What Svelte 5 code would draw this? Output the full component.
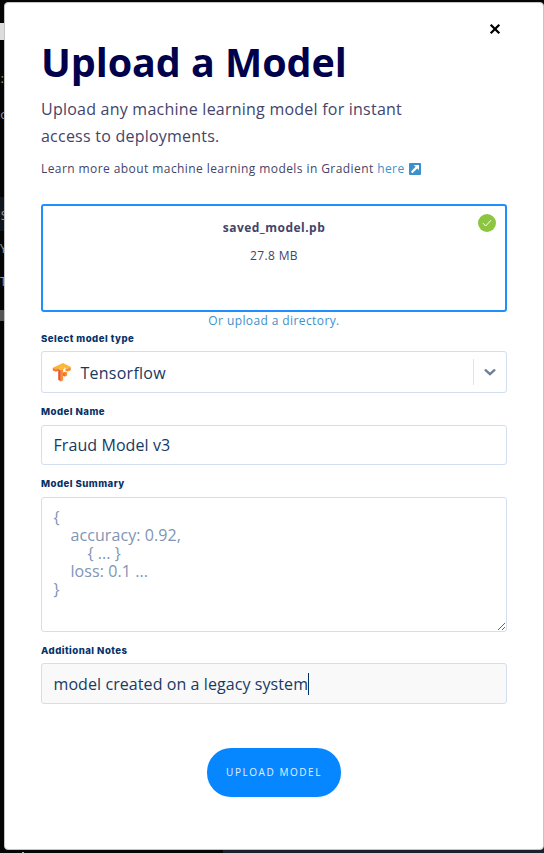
<script>
  let modelName = $state('Fraud Model v3');
  let summary = $state('');
  let notes = $state('model created on a legacy system');
  const placeholder = '{\n    accuracy: 0.92,\n        { ... }\n    loss: 0.1 ...\n}';
</script>

<div class="page">
  <div class="backdrop" aria-hidden="true">
    <i class="tab"></i>
    <i class="row"></i>
    <i class="chip"></i>
    <span style="top:70px">:</span>
    <span style="top:106px" class="round">o</span>
    <span style="top:207px" class="round">S</span>
    <span style="top:241px" class="wide">Y</span>
    <span style="top:274px" class="wide">T</span>
    <i class="foot"></i>
    <i class="tick"></i>
  </div>

  <section class="modal">
    <button class="close" aria-label="Close">
      <svg width="12" height="12" viewBox="0 0 12 12"><path d="M1.7 1.7 10.3 10.3M10.3 1.7 1.7 10.3" stroke="#000" stroke-width="2.3" /></svg>
    </button>
    <h1><span>Upload a Model</span></h1>
    <p class="lead"><span>Upload any machine learning model for instant</span><br /><span>access to deployments.</span></p>
    <p class="learn">
      <span>Learn more about machine learning models in Gradient <a href="#docs">here</a></span>
      <svg width="12" height="12" viewBox="0 0 12 12">
        <rect width="12" height="12" rx="1" fill="#3c91cb" />
        <path d="M4.8 2H10v5.2L8.3 5.5 3.4 10.2 1.9 8.7 6.6 3.8z" fill="#fff" />
      </svg>
    </p>

    <div class="drop">
      <strong>saved_model.pb</strong>
      <span>27.8 MB</span>
      <svg class="ok" width="18" height="18" viewBox="0 0 18 18">
        <circle cx="9" cy="9" r="9" fill="#8cc63f" />
        <path d="M5 9.2 7.7 12 13 6.2" fill="none" stroke="#fff" stroke-width="1" />
      </svg>
    </div>
    <a class="directory" href="#directory"><span>Or upload a directory.</span></a>

    <div class="label first"><span>Select model type</span></div>
    <div class="select">
      <svg class="tf" width="20" height="20" viewBox="0 0 20 20">
        <path d="M.8 5.8 11 1l7.8 4-3.6 1.8L11 4.8 4 8z" fill="#fbb634" />
        <path d="M.8 5.8 4 7.4 6.2 6.4v2.4L4 9.8.8 8.4z" fill="#f37a30" />
        <path d="M15.2 6.8 18.8 5v3.2L15.6 9.6 13.4 8.4V6.2z" fill="#f68c32" />
        <path d="M6.2 6.8 8.8 8.2v11.2l-2.6-1.6z" fill="#e8542b" />
        <path d="M6.2 6.8 11 4.8l2.4 1.2-4.6 2.2z" fill="#fbb634" />
        <path d="M8.8 8.2 11.2 7v11.2l-2.4 1.2z" fill="#f79032" />
        <path d="M11.2 10.6 13.4 9.6 15.2 10.6v2.8L12.8 14.6l-1.6-.8z" fill="#f79032" />
        <path d="M11.2 10.6 12.8 11.6v3l-1.6-.8z" fill="#e8642b" />
      </svg>
      <span class="value">Tensorflow</span>
      <span class="arrow">
        <svg width="12" height="8" viewBox="0 0 12 8"><path d="M1.6 2.2 6 6.1l4.4-3.9" fill="none" stroke="#6e7e96" stroke-width="2.3" stroke-linecap="round" /></svg>
      </span>
    </div>

    <label class="label" for="name"><span>Model Name</span></label>
    <input id="name" class="name" bind:value={modelName} />

    <label class="label" for="summary"><span>Model Summary</span></label>
    <textarea id="summary" bind:value={summary} {placeholder}></textarea>

    <label class="label last" for="notes"><span>Additional Notes</span></label>
    <div class="notes"><span id="notes" role="textbox">{notes}</span><i></i></div>

    <button class="submit">UPLOAD MODEL</button>
  </section>
</div>

<style>
  :global(body) { background: #050505; }
  * { box-sizing: border-box; }
  .page {
    position: relative;
    width: 544px;
    height: 853px;
    padding: 2px 0 0 4px;
    overflow: hidden;
    background: #050505;
    font-family: "Open Sans", "Noto Sans", sans-serif;
    color: #44446a;
  }
  .backdrop { position: absolute; inset: 0; font-size: 13px; color: #999; }
  .backdrop span { position: absolute; right: 540px; line-height: 16px; }
  .backdrop .round { right: 536px; }
  .backdrop .wide { right: auto; left: 0; font-size: 12px; }
  .backdrop i { position: absolute; left: 0; width: 6px; }
  .backdrop .tab { top: 23px; height: 17px; background: #ddd; }
  .backdrop .row { top: 197px; height: 34px; background: #11171e; }
  .backdrop .chip { top: 310px; height: 11px; background: #555; }
  .backdrop .foot { left: 223px; top: 848px; width: 321px; height: 5px; background: #1b202e; }
  .backdrop .tick { left: 22px; top: 852px; width: 2px; height: 1px; background: #aaa; }
  .modal {
    position: relative;
    width: 540px;
    height: 848px;
    padding: 34px 36px 0;
    display: flex;
    flex-direction: column;
    background: #fff;
    border: 1px solid #c4c4c4;
    border-radius: 4px;
  }
  .close {
    position: absolute;
    top: 20px;
    right: 42px;
    width: 12px;
    height: 12px;
    padding: 0;
    border: 0;
    background: none;
    display: flex;
  }
  h1 { margin: 0; height: 50px; line-height: 50px; font-size: 39.5px; font-weight: 700; letter-spacing: -0.07px; color: #00004d; }
  p { margin: 0; }
  .lead { margin-top: 9px; font-size: 16px; line-height: 27px; letter-spacing: 0.23px; }
  .learn { display: flex; align-items: center; gap: 4px; margin-top: 10px; height: 18px; font-size: 12px; line-height: 18px; letter-spacing: 0.42px; }
  a { color: #3c91cb; text-decoration: none; }
  .drop {
    position: relative;
    height: 108px;
    margin-top: 26px;
    padding-top: 12px;
    display: flex;
    flex-direction: column;
    align-items: center;
    gap: 8px;
    border: 2px solid #1e90ff;
    border-radius: 3px;
    font-size: 12px;
    line-height: 20px;
    letter-spacing: 0.35px;
  }
  .drop strong { letter-spacing: 0.48px; }
  .ok { position: absolute; top: 8px; right: 9px; }
  .directory { height: 18px; line-height: 18px; font-size: 12px; letter-spacing: 0.4px; text-align: center; }
  .label { display: block; height: 14px; margin: 12px 0 6px; font: 800 9.6px/14px Inter, "Open Sans", sans-serif; letter-spacing: 0.47px; color: #073269; }
  .label.first { margin: 2px 0 5px; }
  .label.last { margin-bottom: 5px; }
  .select, input, textarea, .notes {
    width: 466px;
    border: 1px solid #d3deee;
    border-radius: 3px;
    background: #fff;
    color: #173963;
    font: 16px "Open Sans", "Noto Sans", sans-serif;
    letter-spacing: 0.08px;
    outline: none;
  }
  .select { display: flex; align-items: center; height: 42px; padding-left: 10px; }
  .value { margin: 2px auto 0 8.5px; letter-spacing: 0.25px; }
  .arrow { width: 33px; height: 26px; display: flex; align-items: center; justify-content: center; border-left: 1px solid #dce3ee; }
  .name { height: 40px; padding: 0 11.5px; }
  textarea { display: block; flex: none; height: 135px; padding: 10px 11.5px; line-height: 18px; resize: vertical; }
  textarea::placeholder { color: #8095b4; }
  .notes { display: flex; align-items: center; height: 41px; padding-left: 11.5px; background: #f9f9f9; }
  .notes i { width: 1px; height: 22px; background: #003266; }
  .submit {
    align-self: center;
    width: 134px;
    height: 49px;
    margin-top: 44px;
    padding: 0 0 2px;
    border: 0;
    border-radius: 24px;
    background: #0787ff;
    color: #e1f1ff;
    font: 10px "Open Sans", "Noto Sans", sans-serif;
    letter-spacing: 1.55px;
  }
</style>
